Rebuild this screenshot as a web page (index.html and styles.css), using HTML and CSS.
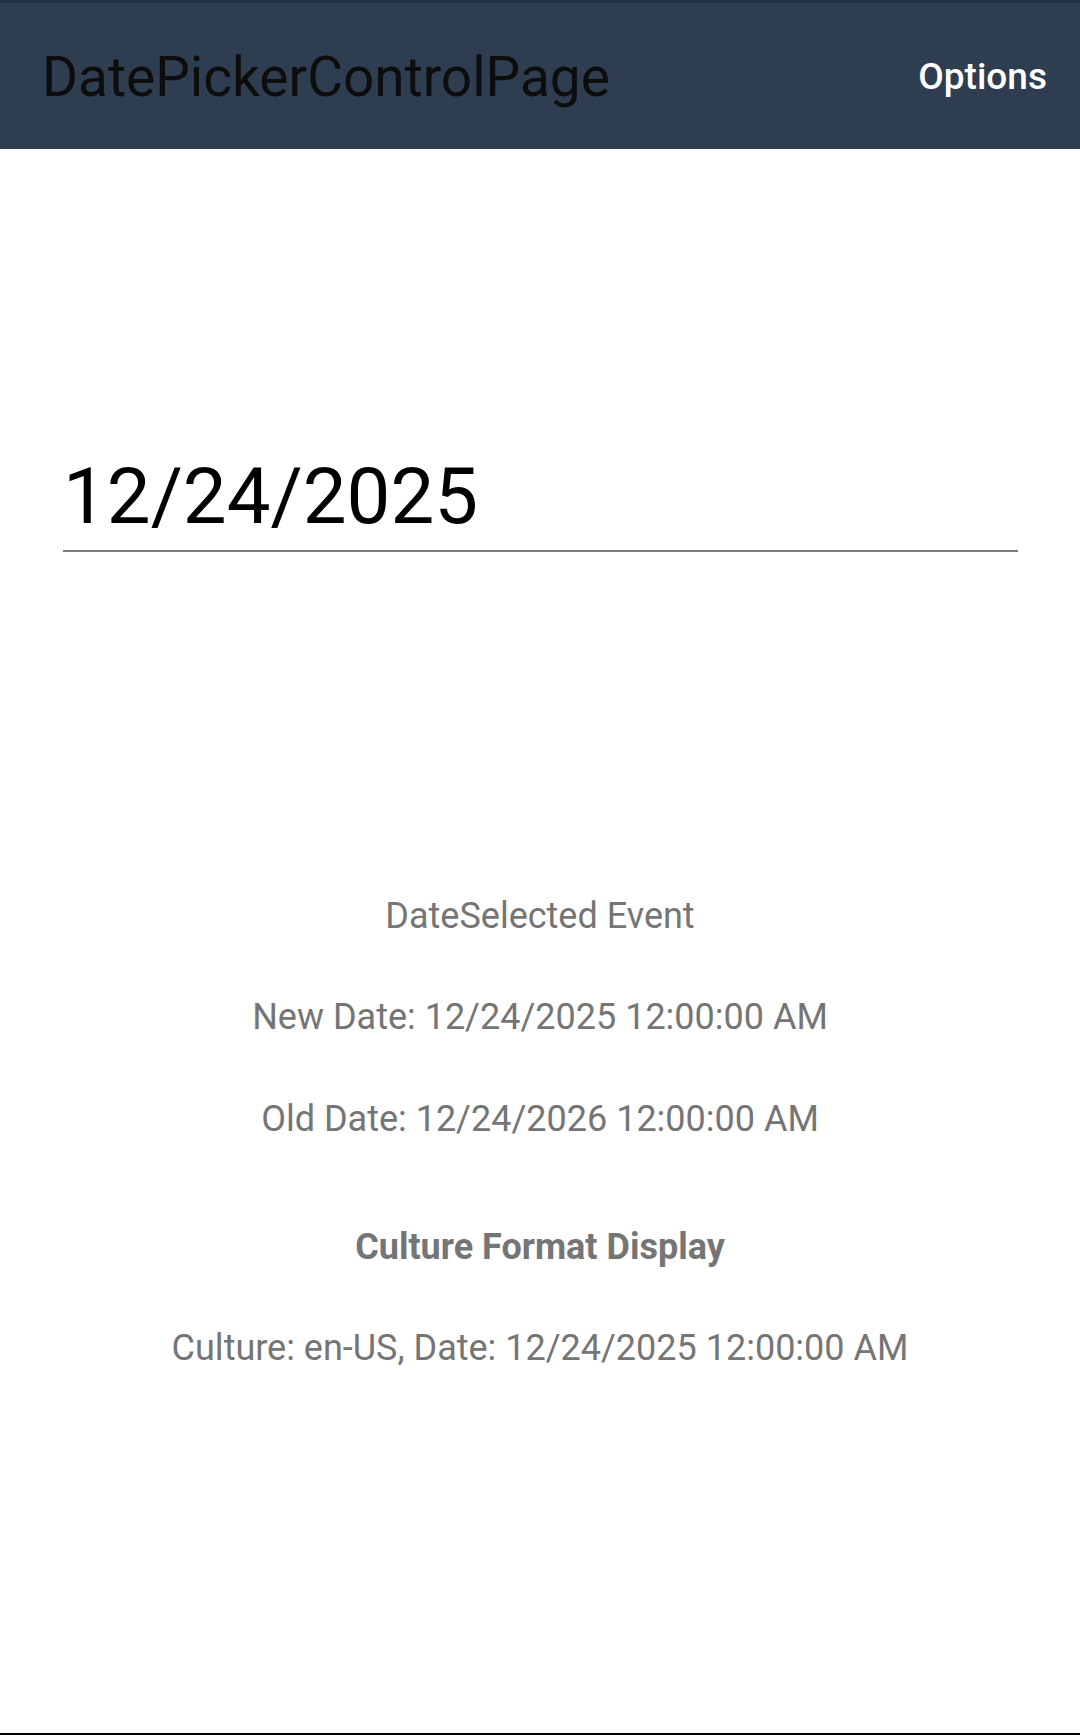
FILE: index.html
```html
<!DOCTYPE html>
<html>
<head>
<meta charset="utf-8">
<link rel="stylesheet" href="styles.css">
</head>
<body>
<div class="screen">
  <header class="toolbar">
    <div class="toolbar-title">DatePickerControlPage</div>
    <div class="toolbar-action">Options</div>
  </header>
  <main class="content">
    <div class="date-field">12/24/2025</div>
    <div class="info">
      <div class="label first">DateSelected Event</div>
      <div class="label gap-a">New Date: 12/24/2025 12:00:00 AM</div>
      <div class="label gap-b">Old Date: 12/24/2026 12:00:00 AM</div>
      <div class="label bold gap-c">Culture Format Display</div>
      <div class="label gap-d">Culture: en-US, Date: 12/24/2025 12:00:00 AM</div>
    </div>
  </main>
</div>
</body>
</html>
```
FILE: styles.css
```css
html, body {
  margin: 0;
  padding: 0;
  background: #ffffff;
}
body {
  font-family: Roboto, "Noto Sans", "Liberation Sans", sans-serif;
}
.screen {
  width: 1080px;
  height: 1735px;
  display: flex;
  flex-direction: column;
  box-sizing: border-box;
  border-bottom: 2px solid #000000;
  overflow: hidden;
}
.toolbar {
  height: 149px;
  box-sizing: border-box;
  background: #2e3e50;
  border-top: 3px solid #1d3045;
  display: flex;
  align-items: center;
  justify-content: space-between;
  padding: 0 33px 0 42px;
}
.toolbar-title {
  font-size: 55px;
  color: #0d0d0d;
  font-weight: 400;
  line-height: 1;
  padding-top: 2px;
}
.toolbar-action {
  font-size: 37px;
  font-weight: 500;
  color: #ffffff;
  line-height: 1;
}
.content {
  flex: 1;
  display: flex;
  flex-direction: column;
}
.date-field {
  margin: 302px 62px 0 63px;
  font-size: 78px;
  line-height: 92px;
  color: #000000;
  padding-bottom: 7px;
  border-bottom: 2px solid #7a7a7a;
}
.info {
  display: flex;
  flex-direction: column;
  align-items: center;
}
.label {
  font-size: 36px;
  line-height: 42px;
  color: #757575;
  text-align: center;
}
.label.bold {
  font-weight: 700;
}
.first { margin-top: 343px; }
.gap-a { margin-top: 59px; }
.gap-b { margin-top: 60px; }
.gap-c { margin-top: 86px; }
.gap-d { margin-top: 59px; }
```
